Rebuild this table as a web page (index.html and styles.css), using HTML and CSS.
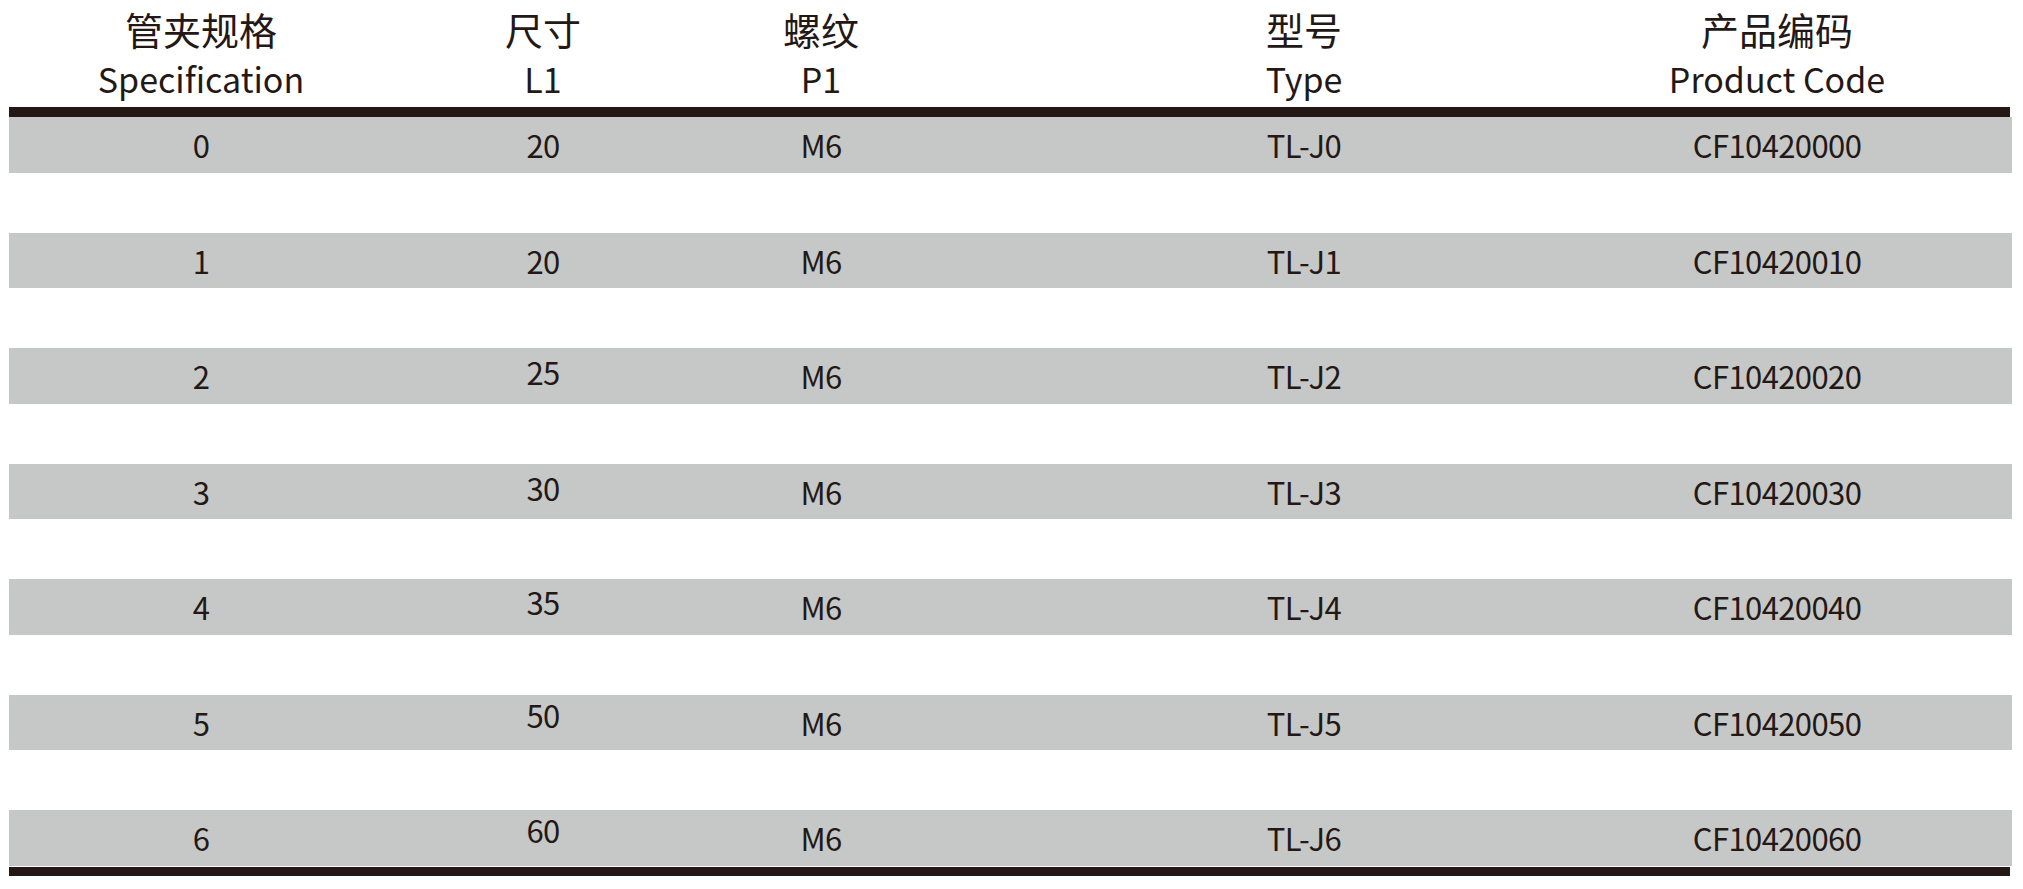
FILE: index.html
```html
<!DOCTYPE html>
<html lang="zh-CN">
<head>
<meta charset="utf-8">
<title>管夹规格</title>
<link rel="stylesheet" href="styles.css">
</head>
<body>
<div class="sheet">
  <div class="head grid">
    <div class="hc"><span class="zh">管夹规格</span><span class="en">Specification</span></div>
    <div class="hc"><span class="zh">尺寸</span><span class="en">L1</span></div>
    <div class="hc"><span class="zh">螺纹</span><span class="en">P1</span></div>
    <div class="hc"><span class="zh">型号</span><span class="en">Type</span></div>
    <div class="hc"><span class="zh">产品编码</span><span class="en">Product Code</span></div>
  </div>
  <div class="rule top"></div>
  <div class="body">
    <div class="row grid"><div>0</div><div>20</div><div>M6</div><div>TL-J0</div><div>CF10420000</div></div>
    <div class="row grid"><div>1</div><div>20</div><div>M6</div><div>TL-J1</div><div>CF10420010</div></div>
    <div class="row grid"><div>2</div><div class="up4">25</div><div>M6</div><div>TL-J2</div><div>CF10420020</div></div>
    <div class="row grid"><div>3</div><div class="up4">30</div><div>M6</div><div>TL-J3</div><div>CF10420030</div></div>
    <div class="row grid"><div>4</div><div class="up5">35</div><div>M6</div><div>TL-J4</div><div>CF10420040</div></div>
    <div class="row grid"><div>5</div><div class="up8">50</div><div>M6</div><div>TL-J5</div><div>CF10420050</div></div>
    <div class="row grid"><div>6</div><div class="up8">60</div><div>M6</div><div>TL-J6</div><div>CF10420060</div></div>
  </div>
  <div class="rule bottom"></div>
</div>
</body>
</html>
```

FILE: styles.css
```css
html, body {
  margin: 0;
  padding: 0;
  background: #ffffff;
}

body {
  font-family: "Noto Sans CJK SC", "Noto Sans", sans-serif;
  color: #231815;
}

.sheet {
  width: 2003px;
  margin-left: 9px;
}

.grid {
  display: grid;
  grid-template-columns: 384px 300px 256px 710px 236px 1fr;
}

.grid > div {
  text-align: center;
}

.head {
  height: 107px;
}

.hc {
  display: flex;
  flex-direction: column;
  align-items: center;
}

.zh {
  font-size: 38px;
  line-height: 38px;
  margin-top: 10px;
}

.en {
  font-size: 34px;
  line-height: 34px;
  margin-top: 14px;
}

.rule {
  background: #231815;
  width: 2001px;
}

.rule.top {
  height: 10px;
}

.rule.bottom {
  height: 9px;
  margin-top: 1px;
}

.body {
  display: flex;
  flex-direction: column;
  gap: 60px;
}

.row {
  height: 55.5px;
  background: #c6c8c7;
  align-items: center;
  font-size: 31px;
  line-height: 31px;
  letter-spacing: -0.6px;
}

.up4 { position: relative; top: -4px; }
.up5 { position: relative; top: -5px; }
.up8 { position: relative; top: -8px; }
```
